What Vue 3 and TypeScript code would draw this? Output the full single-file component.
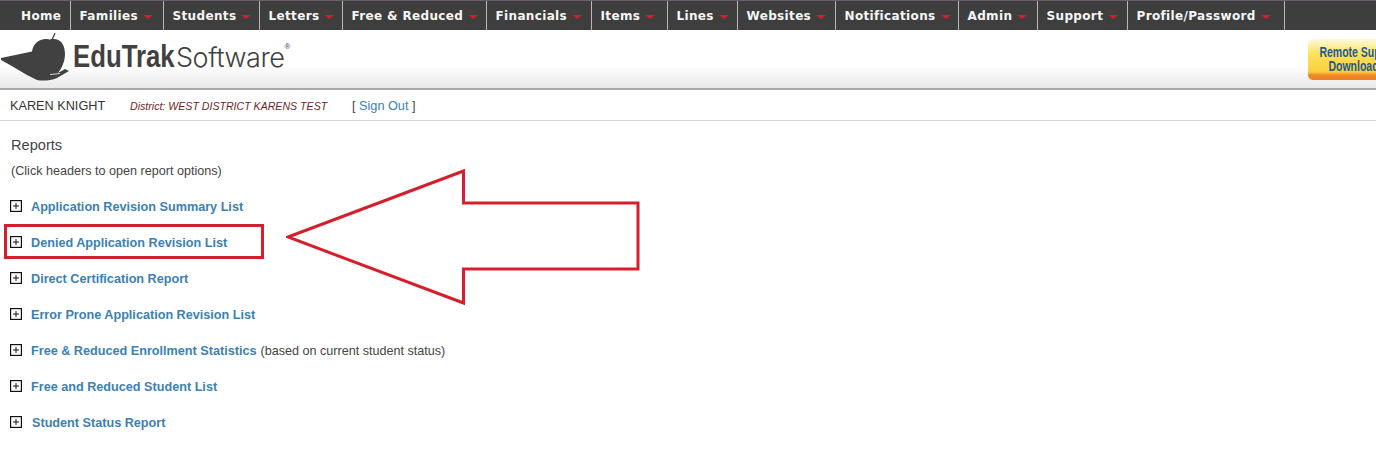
<script setup lang="ts">
interface MenuItem {
  label: string;
  width: number;
  caret: boolean;
}

interface ReportRow {
  title: string;
  note?: string;
}

const menu: MenuItem[] = [
  { label: "Home", width: 71, caret: false },
  { label: "Families", width: 93, caret: true },
  { label: "Students", width: 96, caret: true },
  { label: "Letters", width: 83, caret: true },
  { label: "Free & Reduced", width: 144, caret: true },
  { label: "Financials", width: 105, caret: true },
  { label: "Items", width: 76, caret: true },
  { label: "Lines", width: 70, caret: true },
  { label: "Websites", width: 98, caret: true },
  { label: "Notifications", width: 123, caret: true },
  { label: "Admin", width: 79, caret: true },
  { label: "Support", width: 90, caret: true },
  { label: "Profile/Password", width: 157, caret: true },
];

const reports: ReportRow[] = [
  { title: "Application Revision Summary List" },
  { title: "Denied Application Revision List" },
  { title: "Direct Certification Report" },
  { title: "Error Prone Application Revision List" },
  { title: "Free & Reduced Enrollment Statistics", note: "(based on current student status)" },
  { title: "Free and Reduced Student List" },
  { title: "Student Status Report" },
];
</script>

<template>
  <div class="page">
    <nav class="menu">
      <a
        v-for="item in menu"
        :key="item.label"
        class="menu__item"
        :class="{ 'menu__item--plain': !item.caret }"
        :style="{ width: item.width + 'px' }"
      >
        {{ item.label }}<i v-if="item.caret" class="menu__caret"></i>
      </a>
    </nav>

    <header class="brand">
      <div class="brand__logo">
        <svg class="brand__mark" width="72" height="52" viewBox="0 0 72 52">
          <path d="M52 10 L55 3" stroke="#444" stroke-width="1.3" fill="none" />
          <path
            d="M1 28 L32 21.5 C33 14 39 8.5 47 9 C49 9.5 50 9.5 52 9 C60 8 65 14 65 24 C65 31 62 38 58 43 L65 39 L69 41 L57 48 C50 51 42 51 37 50 L27 45 L10 35 L1 30 Z"
            fill="#414141"
          />
          <path d="M50 44.5 L60 43.5" stroke="#cfcfcf" stroke-width="1" fill="none" />
        </svg>
        <span class="brand__name">EduTrak</span>
        <span class="brand__soft">Software</span>
        <span class="brand__reg">®</span>
      </div>
      <a class="remote"><span class="remote__text">Remote Support<br />Download</span></a>
    </header>

    <div class="userbar">
      <span class="userbar__name">KAREN KNIGHT</span>
      <span class="userbar__district">District: WEST DISTRICT KARENS TEST</span>
      <span class="userbar__sign">[ <a>Sign Out</a> ]</span>
    </div>

    <main class="reports">
      <h1 class="reports__title">Reports</h1>
      <p class="reports__hint">(Click headers to open report options)</p>
      <ul class="reports__list">
        <li v-for="row in reports" :key="row.title" class="report">
          <svg class="report__toggle" width="12" height="12" viewBox="0 0 12 12">
            <rect x="0.6" y="0.6" width="10.8" height="10.8" fill="#fff" stroke="#111" stroke-width="1.2" />
            <path d="M3 6H9M6 3V9" stroke="#111" />
          </svg>
          <a class="report__link" :class="{ 'report__link--nudge': row.title === 'Student Status Report' }">{{ row.title }}</a>
          <span v-if="row.note" class="report__note">{{ row.note }}</span>
        </li>
      </ul>
    </main>

    <!-- annotation drawn over the screenshot -->
    <div class="callout-box"></div>
    <svg class="callout-arrow" width="360" height="140" viewBox="0 0 360 140">
      <path d="M2 69 L177.5 3 V35 H352 V101 H177.5 V135 Z" fill="#fff" stroke="#d4202d" stroke-width="3" />
    </svg>
  </div>
</template>

<style>
html,
body {
  margin: 0;
  background: #fff;
  overflow: hidden;
}
</style>

<style scoped>
.page {
  position: relative;
  width: 1376px;
  height: 469px;
  overflow: hidden;
  font-family: "Liberation Sans", Arial, sans-serif;
  color: #444;
}

.menu {
  display: flex;
  height: 30px;
  box-sizing: border-box;
  background: #3e3e3e;
  border-top: 1px solid #6b5c72;
}

.menu__item {
  display: flex;
  align-items: center;
  flex: none;
  box-sizing: border-box;
  height: 29px;
  padding: 0 0 0 8.5px;
  border-right: 1px solid #b9b9b9;
  color: #f6f6f6;
  font-family: "DejaVu Sans", Verdana, sans-serif;
  font-size: 12px;
  font-weight: 700;
  letter-spacing: 0.35px;
  white-space: nowrap;
}

.menu__item--plain {
  padding-left: 21px;
}

.menu__caret {
  width: 0;
  height: 0;
  margin: 2px 0 0 5px;
  border-left: 5.5px solid transparent;
  border-right: 5.5px solid transparent;
  border-top: 4px solid #d2202a;
}

.brand {
  display: flex;
  align-items: flex-start;
  justify-content: space-between;
  box-sizing: border-box;
  height: 60px;
  background: linear-gradient(#fff 0, #fff 60%, #e9e9e9 100%);
  border-bottom: 2px solid #a9a7aa;
}

.brand__logo {
  display: flex;
  align-items: baseline;
  height: 52px;
  color: #414141;
}

.brand__mark {
  flex: none;
  align-self: flex-start;
}

.brand__name {
  display: inline-block;
  width: 103px;
  margin-left: 1px;
  font-size: 32px;
  font-weight: 700;
  line-height: 52px;
  transform: scaleX(0.805);
  transform-origin: left center;
}

.brand__soft {
  font-family: Inter, "Liberation Sans", sans-serif;
  font-size: 27px;
  font-weight: 300;
  letter-spacing: -0.45px;
  line-height: 52px;
}

.brand__reg {
  align-self: flex-start;
  margin-top: 11px;
  font-size: 8px;
  line-height: 12px;
}

.remote {
  flex: none;
  box-sizing: border-box;
  width: 91px;
  height: 41px;
  margin: 9px -23px 0 0;
  padding-top: 6px;
  overflow: hidden;
  border-radius: 5px;
  background: linear-gradient(#fffbe0 0, #fde25f 35%, #fbcf3a 80%, #f08a2a 88%, #ee7c22 100%);
  color: #1d5a8e;
  font-size: 14px;
  font-weight: 700;
  line-height: 14px;
  text-align: center;
}

.remote__text {
  display: block;
  white-space: nowrap;
  transform: scaleX(0.75);
}

.userbar {
  display: flex;
  align-items: center;
  box-sizing: border-box;
  height: 31px;
  padding: 2px 0 0 10px;
  border-bottom: 1px solid #d8d8d8;
  font-size: 12.7px;
}

.userbar__name {
  width: 120px;
  color: #333;
}

.userbar__district {
  width: 222px;
  color: #6e1f28;
  font-size: 10.6px;
  font-style: italic;
}

.userbar__sign a {
  color: #3a82b5;
}

.reports {
  padding: 15px 0 0 11px;
}

.reports__title {
  margin: 0;
  font-size: 14.6px;
  font-weight: 400;
  line-height: 18px;
}

.reports__hint {
  margin: 9px 0 0;
  font-size: 12.6px;
  line-height: 16px;
}

.reports__list {
  margin: 10px 0 0;
  padding: 0;
  list-style: none;
}

.report {
  display: flex;
  align-items: center;
  height: 36px;
  font-size: 12.65px;
}

.report__toggle {
  flex: none;
  margin: -3px 8px 0 -1px;
}

.report__link {
  margin-left: 1px;
  color: #3b81b3;
  font-weight: 700;
}

.report__link--nudge {
  margin-left: 2px;
}

.report__note {
  margin-left: 4px;
  font-size: 12.6px;
}

.callout-box {
  position: absolute;
  left: 4px;
  top: 224px;
  width: 260px;
  height: 35px;
  box-sizing: border-box;
  border: 3px solid #d4202d;
}

.callout-arrow {
  position: absolute;
  left: 286px;
  top: 168px;
}
</style>
